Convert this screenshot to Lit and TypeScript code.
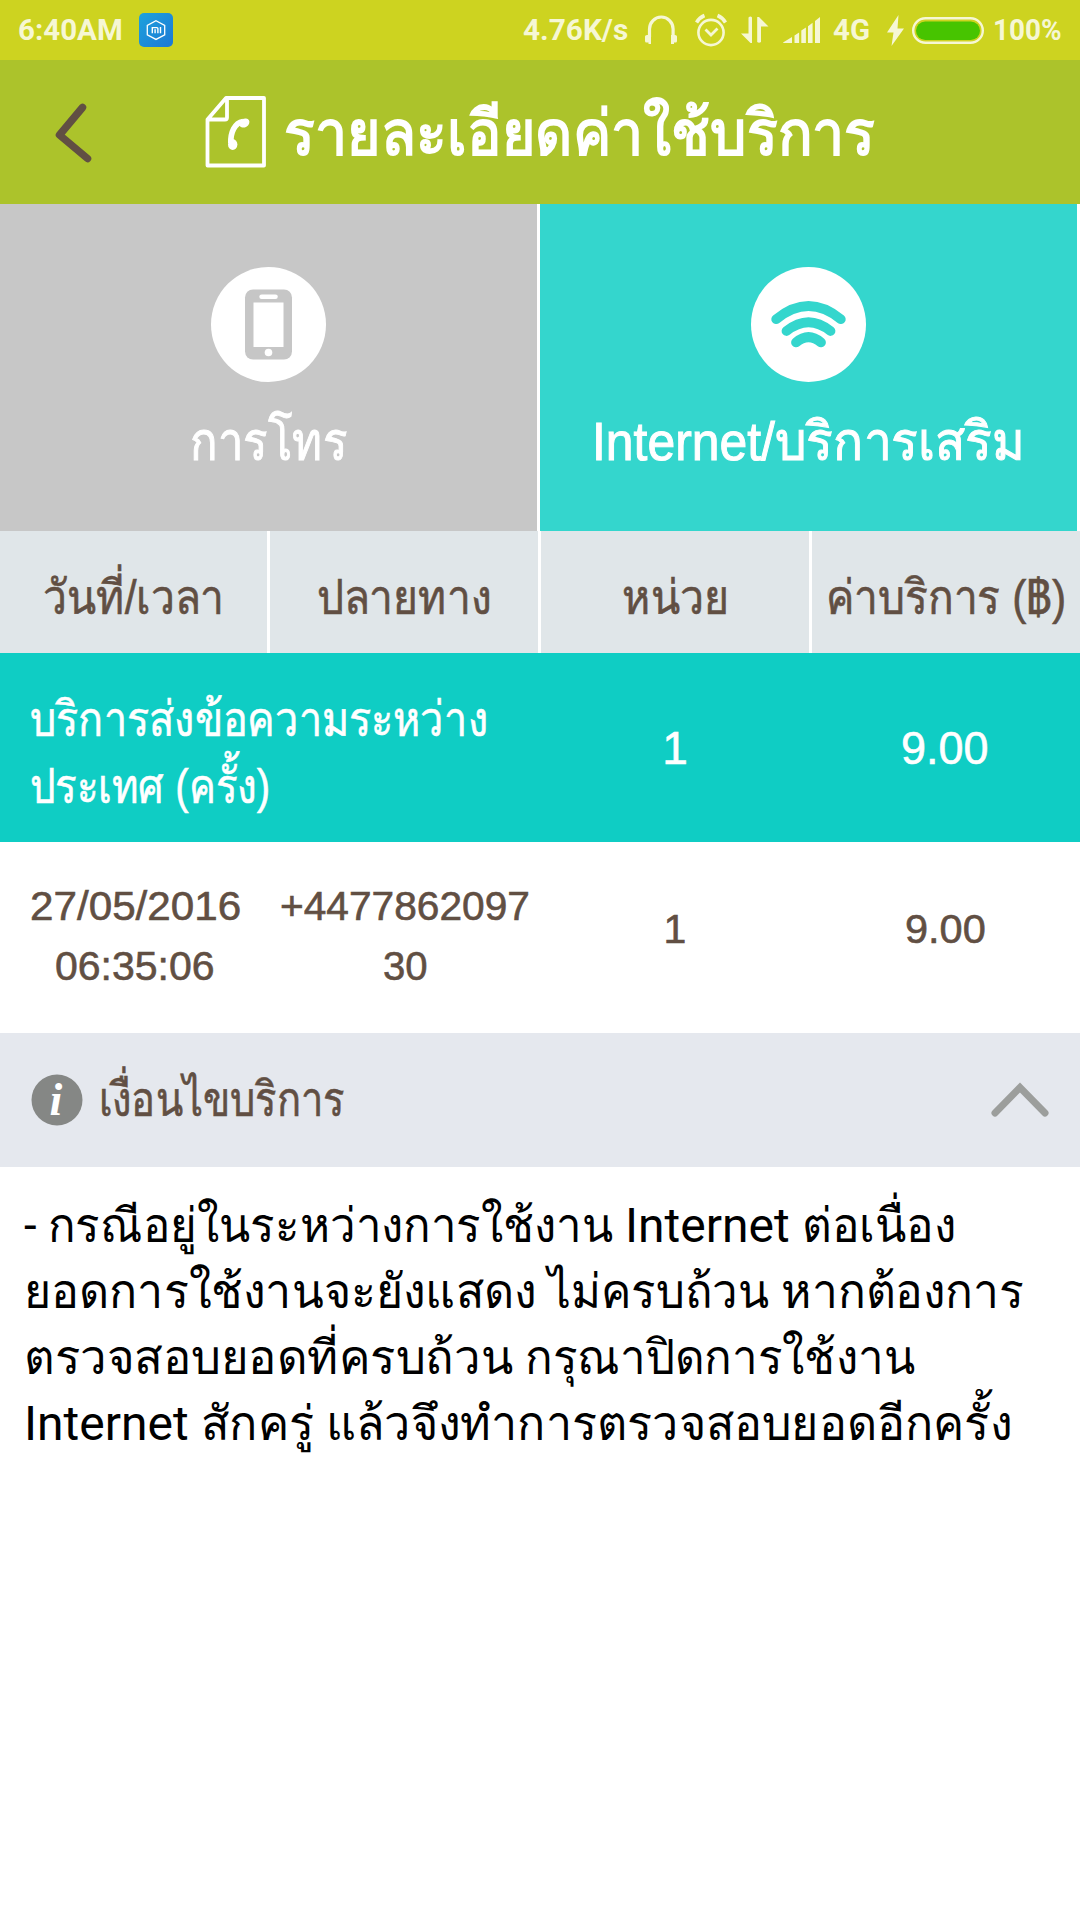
import { LitElement, html, css, svg } from "lit";
import { customElement, property } from "lit/decorators.js";
import { styleMap } from "lit/directives/style-map.js";

// A single line of text condensed or widened to occupy exactly `width` pixels.
@customElement("fit-text")
class FitText extends LitElement {
  @property({ type: Number }) width = 0;
  @property({ type: Number }) natural = 0;
  static styles = css`
    :host { display: inline-block; white-space: nowrap; flex: none; }
    .box { display: inline-block; text-align: left; vertical-align: top; }
    .text { display: inline-block; transform-origin: 0 50%; vertical-align: top; }
  `;
  firstUpdated() {
    const el = this.renderRoot.querySelector(".text") as HTMLElement;
    this.natural = el.offsetWidth;
  }
  render() {
    const box = this.natural ? { width: `${this.width}px` } : {};
    const text = this.natural ? { transform: `scaleX(${this.width / this.natural})` } : {};
    return html`<span class="box" style=${styleMap(box)}><span class="text" style=${styleMap(text)}><slot></slot></span></span>`;
  }
}

@customElement("status-bar")
class StatusBar extends LitElement {
  static styles = css`
    :host { display: flex; align-items: center; height: 60px; background: #cdd320; color: #f6f7d4;
      font: 700 29.5px/61px Roboto, sans-serif; padding: 0 18px 0 18px; box-sizing: border-box; }
    svg { display: block; flex: none; }
    .app { margin-left: 16px; }
    .fill { flex: 1; }
    .phones { margin-left: 17px; }
    .alarm { margin-left: 18px; }
    .arrows { margin-left: 14px; }
    .signal { margin-left: 14px; }
    .net { margin-left: 12px; }
    .bolt { margin-left: 17px; }
    .battery { margin-left: 8px; }
    .pct { margin-left: 9px; }
  `;
  render() {
    return html`
      <fit-text width="105">6:40AM</fit-text>
      <svg class="app" width="34" height="34" viewBox="0 0 34 34">
        <defs><linearGradient id="g" x1="0" y1="0" x2="1" y2="1"><stop offset="0" stop-color="#1da3dd"/><stop offset="1" stop-color="#1c78d4"/></linearGradient></defs>
        <rect width="34" height="34" rx="5" fill="url(#g)"/>
        <path d="M17 7.8l8.7 4.6v9.4L17 26.4l-8.7-4.6v-9.4z" fill="none" stroke="#fff" stroke-width="1.3"/>
        <path d="M13.3 20.2v-5.6h4.6q1 0 1 1v4.6M16.1 16.2v4M21.5 14v6.2" fill="none" stroke="#fff" stroke-width="1.4"/>
      </svg>
      <span class="fill"></span>
      <fit-text class="speed" width="105">4.76K/s</fit-text>
      <svg class="phones" width="32" height="30" viewBox="0 0 32 30">
        <path d="M4.500 22V14a11.800 12 0 0 1 23.600 0v8" fill="none" stroke="currentColor" stroke-width="3.200"/>
        <path d="M2 20h4v9H3.500v-1.500H1.500q-1.500 0-1.500-1.500v-4.500q0-1.500 2-1.500zM26 20h4q2 0 2 1.500V26q0 1.500-1.500 1.500h-1.500V29h-3z" fill="currentColor"/>
      </svg>
      <svg class="alarm" width="32" height="34" viewBox="0 0 32 34">
        <circle cx="16" cy="19.500" r="12.600" fill="none" stroke="currentColor" stroke-width="2.600"/>
        <path d="M10.500 16.500l5.500 5.500 6.500-6.500" fill="none" stroke="currentColor" stroke-width="2.800"/>
        <path d="M1.500 9.500Q4.500 4.500 9.500 2.500M30.500 9.500Q27.500 4.500 22.500 2.500" fill="none" stroke="currentColor" stroke-width="3.600"/>
      </svg>
      <svg class="arrows" width="28" height="28" viewBox="0 0 28 28">
        <path d="M7.500 1.500q2-2 3.500 0V27H9.500L0 17.500h7.500zM16.200 1h1.800l9.500 9.500H20V26q-2 1.500-3.800 0z" fill="currentColor"/>
      </svg>
      <svg class="signal" width="38" height="28" viewBox="0 0 38 28">
        <path d="M0 26.500L9 21v6H.5zM11.500 19.500l4.600-3V27h-4.600zM18.300 14.500l4.600-3V27h-4.600zM25 10.200l4.600-3.500V27H25zM32 5l5-4V27h-5z" fill="currentColor"/>
      </svg>
      <fit-text class="net" width="37">4G</fit-text>
      <svg class="bolt" width="17" height="31" viewBox="0 0 17 31">
        <path d="M11.500 0L0 17.500h6.500L4.500 31 17 13.500h-6.500z" fill="currentColor"/>
      </svg>
      <svg class="battery" width="72" height="27" viewBox="0 0 72 27">
        <rect x="1.200" y="1.200" width="69.600" height="24.600" rx="12.300" fill="none" stroke="currentColor" stroke-width="2.400"/>
        <rect x="4" y="4.500" width="64" height="18.500" rx="9.200" fill="#47c400"/>
      </svg>
      <fit-text class="pct" width="69">100%</fit-text>
    `;
  }
}

const phoneIcon = svg`
  <circle cx="57.500" cy="57.500" r="57.500" fill="#fff"/>
  <rect x="34" y="22.500" width="47" height="70" rx="8" fill="#c6c6c6"/>
  <rect x="48.300" y="27.500" width="18.500" height="4.600" rx="2.300" fill="#fff"/>
  <rect x="42.500" y="35.500" width="30" height="44.500" fill="#fff"/>
  <circle cx="57.500" cy="85.500" r="3.800" fill="#fff"/>`;

const wifiIcon = svg`
  <circle cx="57.500" cy="57.500" r="57.500" fill="#fff"/>
  <g fill="none" stroke="#34d6cd" stroke-width="9.800" stroke-linecap="round">
    <path d="M25.200 52.200Q57.500 25.800 89.800 52.200"/>
    <path d="M35.500 64Q57.500 46.400 79.500 64"/>
    <path d="M45 75.400Q57.500 64.800 70 75.400"/>
  </g>`;

@customElement("app-root")
class AppRoot extends LitElement {
  static styles = css`
    :host { display: block; width: 1080px; height: 1920px; background: #fff; color: #614f43; overflow: hidden;
      font-family: "Liberation Sans", sans-serif; }
    svg { display: block; flex: none; }
    .bar { display: flex; align-items: center; height: 144px; background: #acc32b; color: #fff; box-sizing: border-box; padding-left: 51px; }
    .doc { margin-left: 111px; }
    h1 { margin: 0 0 0 17px; font-size: 63px; line-height: 146px; height: 144px; font-weight: 700; white-space: nowrap; }
    .tabs { display: grid; grid-template-columns: 537px 537px; gap: 3px; height: 327px; }
    .tab { display: flex; flex-direction: column; align-items: center; padding-top: 63px; color: #fff; font-size: 54px; }
    .tab fit-text { line-height: 70px; margin-top: 24px; -webkit-text-stroke: 1px #fff; }
    .call { background: #c7c7c7; }
    .net { background: #34d6cd; }
    .heads { display: grid; grid-template-columns: 267px 268px 268px 268px; gap: 3px; height: 122px; }
    .heads span { background: #e0e6e9; text-align: center; font-size: 48px; line-height: 134px; height: 122px; -webkit-text-stroke: 0.6px #614f43; }
    .row { display: grid; grid-template-columns: 270px 270px 270px 270px; align-items: center; text-align: center; }
    .group { height: 189px; background: #0fcdc4; color: #fff; font-size: 46px; -webkit-text-stroke: 0.6px #fff; }
    .name { grid-column: span 2; text-align: left; padding: 10px 0 0 30px; line-height: 67px; font-size: 49px; }
    .item { height: 191px; font-size: 41px; line-height: 60px; -webkit-text-stroke: 0.6px #614f43; }
    .item div { padding-bottom: 3px; }
    .item .num { padding-bottom: 17px; }
    .line { display: flex; white-space: nowrap; }
    .item .line { justify-content: center; }
    .terms { display: flex; align-items: center; height: 134px; background: #e5e8ee; padding: 0 31px 0 31px; font-size: 48px; }
    .terms .label { flex: 1; margin-left: 16px; line-height: 134px; -webkit-text-stroke: 0.6px #614f43; }
    .i { font: italic 700 46px "Liberation Serif", serif; }
    .note { margin: 0; padding: 26px 24px; color: #000; font: 400 48px/66px Roboto, sans-serif; }
    .note .line { gap: 12px; }
  `;
  render() {
    return html`
      <status-bar></status-bar>
      <header class="bar">
        <svg width="43" height="64" viewBox="0 0 43 64">
          <path d="M31.500 7.500L8.500 35l28 23.500" fill="none" stroke="#614f43" stroke-width="7.500" stroke-linecap="round" stroke-linejoin="round"/>
        </svg>
        <svg class="doc" width="62" height="72" viewBox="0 0 62 72">
          <path d="M2.500 23.500L21 2h38v67.500H2.500zM2.500 23.500h17.500q2 0 2-2V2" fill="none" stroke="#fff" stroke-width="3.800" stroke-linejoin="round"/>
          <path d="M38 25.500C29.500 27 25.500 36.500 25.800 47" fill="none" stroke="#fff" stroke-width="5.600"/>
          <ellipse cx="39.300" cy="27" rx="5.400" ry="4.200" fill="#fff" transform="rotate(-30 39.300 27)"/>
          <ellipse cx="27.700" cy="48.500" rx="4.700" ry="5.400" fill="#fff"/>
        </svg>
        <h1><fit-text width="591">รายละเอียดค่าใช้บริการ</fit-text></h1>
      </header>
      <nav class="tabs">
        <div class="tab call"><svg width="115" height="115" viewBox="0 0 115 115">${phoneIcon}</svg><fit-text width="157">การโทร</fit-text></div>
        <div class="tab net"><svg width="115" height="115" viewBox="0 0 115 115">${wifiIcon}</svg><fit-text width="433">Internet/บริการเสริม</fit-text></div>
      </nav>
      <div class="heads">
        <span><fit-text width="181">วันที่/เวลา</fit-text></span><span><fit-text width="174">ปลายทาง</fit-text></span>
        <span><fit-text width="107">หน่วย</fit-text></span><span><fit-text width="240">ค่าบริการ (฿)</fit-text></span>
      </div>
      <div class="row group">
        <div class="name"><span class="line"><fit-text width="458">บริการส่งข้อความระหว่าง</fit-text></span><span class="line"><fit-text width="240">ประเทศ (ครั้ง)</fit-text></span></div>
        <div>1</div><div><fit-text width="88">9.00</fit-text></div>
      </div>
      <div class="row item">
        <div><span class="line"><fit-text width="211">27/05/2016</fit-text></span><span class="line"><fit-text width="160">06:35:06</fit-text></span></div>
        <div><span class="line"><fit-text width="250">+4477862097</fit-text></span><span class="line"><fit-text width="45">30</fit-text></span></div>
        <div class="num">1</div><div class="num"><fit-text width="81">9.00</fit-text></div>
      </div>
      <div class="terms">
        <svg width="52" height="52" viewBox="0 0 52 52">
          <circle cx="26" cy="26" r="25.500" fill="#858785"/>
          <text class="i" x="25" y="41" text-anchor="middle" fill="#fff">i</text>
        </svg>
        <div class="label"><fit-text width="246">เงื่อนไขบริการ</fit-text></div>
        <svg width="58" height="36" viewBox="0 0 58 36">
          <path d="M4 31L29 5.500 54 31" fill="none" stroke="#9c9e9c" stroke-width="7" stroke-linecap="round"/>
        </svg>
      </div>
      <div class="note">
        <div class="line"><fit-text width="589">- กรณีอยู่ในระหว่างการใช้งาน</fit-text><fit-text width="165">Internet</fit-text><fit-text width="154">ต่อเนื่อง</fit-text></div>
        <div class="line"><fit-text width="512">ยอดการใช้งานจะยังแสดง</fit-text><fit-text width="221">ไม่ครบถ้วน</fit-text><fit-text width="243">หากต้องการ</fit-text></div>
        <div class="line"><fit-text width="489">ตรวจสอบยอดที่ครบถ้วน</fit-text><fit-text width="390">กรุณาปิดการใช้งาน</fit-text></div>
        <div class="line"><fit-text width="165">Internet</fit-text><fit-text width="113">สักครู่</fit-text><fit-text width="686">แล้วจึงทำการตรวจสอบยอดอีกครั้ง</fit-text></div>
      </div>
    `;
  }
}
